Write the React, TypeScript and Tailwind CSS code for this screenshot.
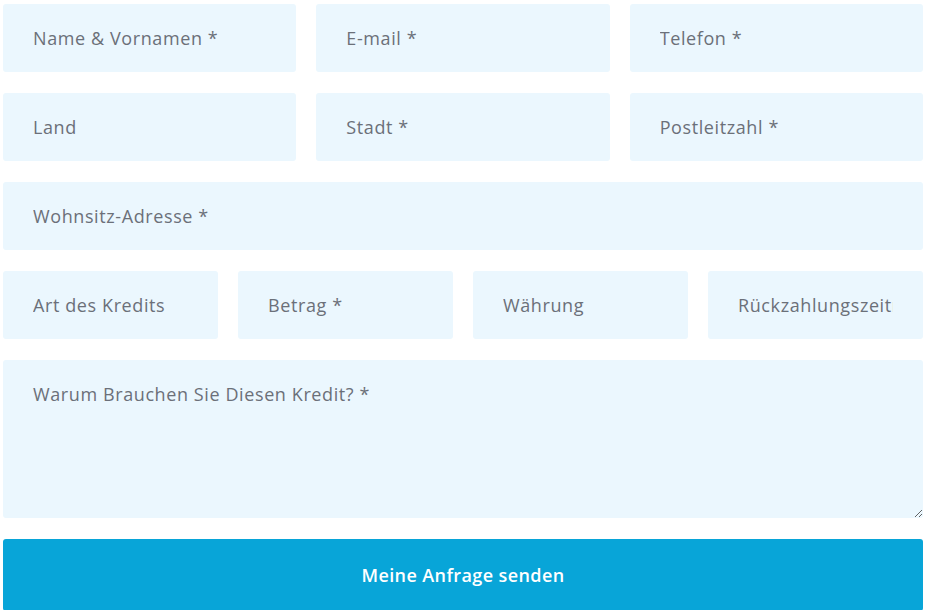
import React from 'react';

const field =
  'h-[68px] w-full rounded-[3px] bg-[#ebf7fe] px-[30px] text-[18px] tracking-[0.6px] text-[#5f6670] placeholder:text-[#6b7079] outline-none';

export default function App() {
  return (
    <div className="min-h-[610px] bg-white pl-[3px] pt-[4px] font-['Open_Sans',sans-serif]">
      <form className="flex w-[920px] flex-col gap-[21px]">
        <div className="grid grid-cols-3 gap-5">
          <input className={field} placeholder="Name & Vornamen *" />
          <input className={field} placeholder="E-mail *" />
          <input className={field} placeholder="Telefon *" />
        </div>
        <div className="grid grid-cols-3 gap-5">
          <input className={field} placeholder="Land" />
          <input className={field} placeholder="Stadt *" />
          <input className={field} placeholder="Postleitzahl *" />
        </div>
        <input className={field} placeholder="Wohnsitz-Adresse *" />
        <div className="grid grid-cols-4 gap-5">
          <input className={field} placeholder="Art des Kredits" />
          <input className={field} placeholder="Betrag *" />
          <input className={field} placeholder="Währung" />
          <input className={field} placeholder="Rückzahlungszeitraum" />
        </div>
        <textarea
          className="h-[158px] w-full rounded-[3px] bg-[#ebf7fe] px-[30px] pt-[21px] text-[18px] tracking-[0.6px] text-[#5f6670] placeholder:text-[#6b7079] outline-none"
          placeholder="Warum Brauchen Sie Diesen Kredit? *"
        />
        <button
          type="submit"
          className="h-[72px] w-full rounded-[3px] bg-[#08a5d8] text-[18px] font-semibold tracking-[0.4px] text-white"
        >
          Meine Anfrage senden
        </button>
      </form>
    </div>
  );
}
